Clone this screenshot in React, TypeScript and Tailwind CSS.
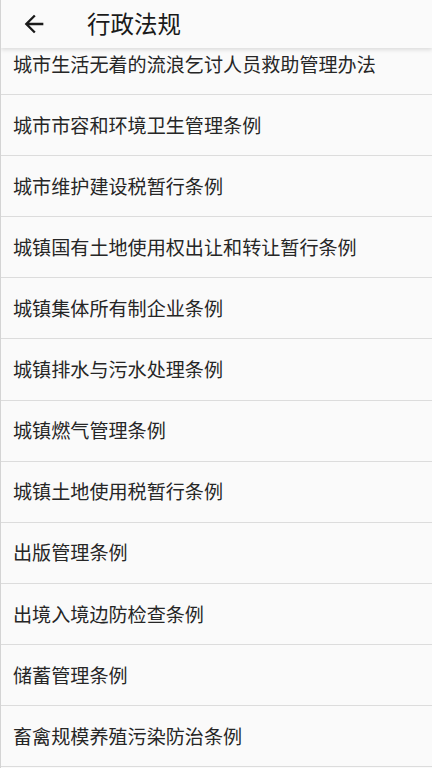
const ITEMS = [
  "城市生活无着的流浪乞讨人员救助管理办法",
  "城市市容和环境卫生管理条例",
  "城市维护建设税暂行条例",
  "城镇国有土地使用权出让和转让暂行条例",
  "城镇集体所有制企业条例",
  "城镇排水与污水处理条例",
  "城镇燃气管理条例",
  "城镇土地使用税暂行条例",
  "出版管理条例",
  "出境入境边防检查条例",
  "储蓄管理条例",
  "畜禽规模养殖污染防治条例",
];

function BackArrow() {
  return (
    <svg viewBox="0 0 24 24" className="w-[28px] h-[28px] fill-[#1a1a1a]">
      <path d="M20 11H7.83l5.59-5.59L12 4l-8 8 8 8 1.41-1.41L7.83 13H20v-2z" />
    </svg>
  );
}

export default function App() {
  return (
    <div
      className="w-[432px] h-[768px] overflow-hidden flex flex-col bg-[#fafafa] border-l border-[#d4d4d4]"
      style={{ fontFamily: '"Noto Sans CJK SC", "Noto Sans", sans-serif' }}
    >
      <header className="relative z-10 h-12 shrink-0 flex items-center bg-[#fafafa] shadow-[0_2px_4px_rgba(0,0,0,0.12)]">
        <div className="pl-[19px] w-[86px] flex items-center">
          <BackArrow />
        </div>
        <h1 className="text-[23.5px] leading-none text-[#1a1a1a]">行政法规</h1>
      </header>
      <div className="-mt-[14px] flex flex-col">
        {ITEMS.map((t) => (
          <div
            key={t}
            className="h-[61.1px] shrink-0 flex items-center pl-[12px] border-b border-[#dcdcdc] text-[19.1px] text-[#262626]"
          >
            {t}
          </div>
        ))}
      </div>
    </div>
  );
}
